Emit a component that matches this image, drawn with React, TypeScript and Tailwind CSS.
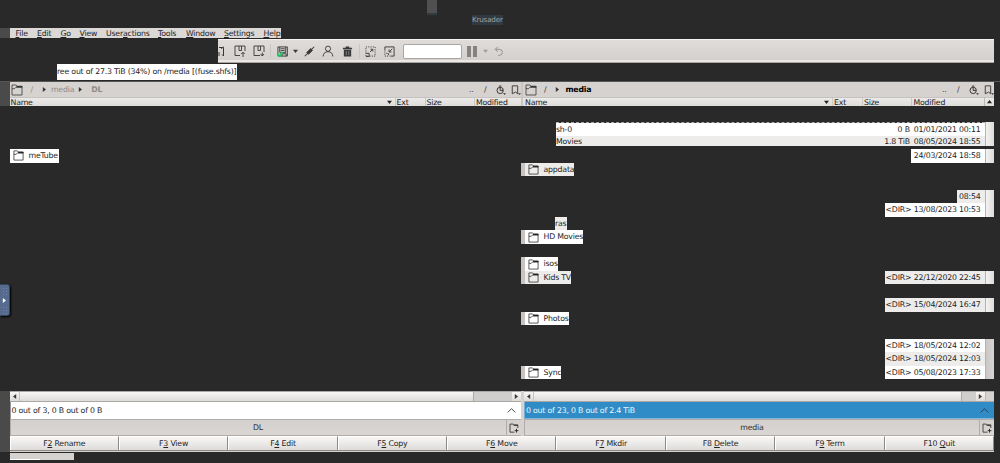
import type { ReactNode } from 'react'
import clsx from 'clsx'

type Entry = {
  left?: string
  name?: string
  nameWidth?: string
  detail?: [size: string, date: string]
  detailWidth?: string
  thumb?: boolean
}

const MENU: { label: string; key: number; gap: string }[] = [
  { label: 'File', key: 0, gap: 'w-[21.5px]' },
  { label: 'Edit', key: 0, gap: 'w-[23.5px]' },
  { label: 'Go', key: 0, gap: 'w-[19px]' },
  { label: 'View', key: 0, gap: 'w-[26.5px]' },
  { label: 'Useractions', key: 4, gap: 'w-[52px]' },
  { label: 'Tools', key: 0, gap: 'w-[28px]' },
  { label: 'Window', key: 0, gap: 'w-[38px]' },
  { label: 'Settings', key: 0, gap: 'w-[39.5px]' },
  { label: 'Help', key: 0, gap: 'w-[18px]' },
]

const ENTRIES: Entry[] = [
  { left: 'meTube', detail: ['', '24/03/2024 18:58'], detailWidth: 'w-[83px]' },
  { name: 'appdata', nameWidth: 'w-[53px]' },
  {},
  { detail: ['', '08:54'], detailWidth: 'w-[37px]' },
  { detail: ['<DIR>', '13/08/2023 10:53'], detailWidth: 'w-[109px]' },
  { name: 'ras' },
  { name: 'HD Movies', nameWidth: 'w-[62px]' },
  {},
  { name: 'isos', nameWidth: 'w-[37px]' },
  { name: 'Kids TV', nameWidth: 'w-[50px]', detail: ['<DIR>', '22/12/2020 22:45'], detailWidth: 'w-[109px]' },
  {},
  { detail: ['<DIR>', '15/04/2024 16:47'], detailWidth: 'w-[109px]' },
  { name: 'Photos', nameWidth: 'w-[48px]' },
  {},
  { detail: ['<DIR>', '18/05/2024 12:02'], detailWidth: 'w-[109px]', thumb: true },
  { detail: ['<DIR>', '18/05/2024 12:03'], detailWidth: 'w-[109px]', thumb: true },
  { name: 'Sync', nameWidth: 'w-[40px]', detail: ['<DIR>', '05/08/2023 17:33'], detailWidth: 'w-[109px]', thumb: true },
]

const KEYS: [string, string, string][] = [
  ['F', '2', ' Rename'],
  ['F', '3', ' View'],
  ['F', '4', ' Edit'],
  ['F', '5', ' Copy'],
  ['F', '6', ' Move'],
  ['F', '7', ' Mkdir'],
  ['F8 ', 'D', 'elete'],
  ['F', '9', ' Term'],
  ['F10 ', 'Q', 'uit'],
]

// ── Icons ───────────────────────────────────────────────────────────────

function Icon({ size = 12, className, children }: { size?: number; className?: string; children: ReactNode }) {
  return (
    <svg
      width={size}
      height={size}
      viewBox="0 0 12 12"
      fill="none"
      stroke="currentColor"
      className={clsx('shrink-0', className)}
    >
      {children}
    </svg>
  )
}

function FolderIcon({ className, size = 12 }: { className?: string; size?: number }) {
  return (
    <Icon size={size} className={className}>
      <path d="M1 11V1h4l1.2 1.2H11V11Z" strokeWidth=".8" />
      <path d="M1 4.7h2.6L5 3.2h6" strokeWidth=".8" />
      <path d="M5.5 2H11.4v1.5H5.5Z" fill="currentColor" stroke="none" />
    </Icon>
  )
}

function HistoryIcon() {
  return (
    <Icon size={10}>
      <circle cx="5" cy="6.5" r="3.8" strokeWidth="1.2" />
      <path d="M5 6.5V3M5 6.5h3.5M3.5 1.3h3" strokeWidth="1.2" />
      <path d="M8.5 10h3.5l-1.75 2Z" fill="currentColor" stroke="none" />
    </Icon>
  )
}

function BookmarkIcon() {
  return (
    <Icon size={10}>
      <path d="M1.5 1h6.5v9.5L5.5 8.5 1.5 10.5Z" strokeWidth="1.1" />
      <path d="M8.5 10h3.5l-1.75 2Z" fill="currentColor" stroke="none" />
    </Icon>
  )
}

function NewTabIcon() {
  return (
    <Icon size={10}>
      <path d="M6.5 11H1.2V1.3h4L6.4 2.5h4.2V6" strokeWidth="1" />
      <path d="M9 7v4.5M6.8 9.2h4.5" strokeWidth="1.2" />
      <path d="M5.5 2h5.4v1.3H5.5Z" fill="currentColor" stroke="none" />
    </Icon>
  )
}

function Triangle({ dir, className }: { dir: 'left' | 'right' | 'up' | 'down'; className?: string }) {
  const d = {
    left: 'M4.2 0v5L1 2.5Z',
    right: 'M.8 0v5L4 2.5Z',
    up: 'M0 4.2h5L2.5 1Z',
    down: 'M0 .8h5L2.5 4Z',
  }[dir]
  return (
    <svg width="5" height="5" viewBox="0 0 5 5" className={clsx('shrink-0', className)}>
      <path d={d} fill="currentColor" />
    </svg>
  )
}

// ── Toolbar ─────────────────────────────────────────────────────────────

function Toolbar() {
  return (
    <div className="ml-[218px] mr-[6px] flex h-[24px] shrink-0 items-center border-t border-b border-t-[#f5f3f2] border-b-[#a8a5a3] bg-linear-to-b from-[#e0dcda] to-[#d3cfcc] text-[#383838] shadow-[inset_0_-2px_0_#ebe8e6]">
      <Icon size={12} className="-ml-[5px] [clip-path:inset(0_0_0_5px)]">
        <path d="M6 2.5h4.5V11M8.2 3.8 10.5 1.8M9 9.5l1.5 1.5M6 11V7" strokeWidth="1" />
      </Icon>
      <Icon size={12} className="ml-[9px]">
        <path d="M6 10.5H1V1h10v5M5 1v4.5h2.5V1M9 12V7.5M7.2 9 9 7.2 10.8 9" strokeWidth=".9" />
      </Icon>
      <Icon size={12} className="ml-[7px]">
        <path d="M7 10.5H1V1h10v6M5 1v4.5h2.5V1M7.5 9 9.3 11 11 9M9.3 7.5V11" strokeWidth=".9" />
      </Icon>
      <span className="ml-[5px] h-[14px] w-px bg-[#c9c5c3]" />
      <Icon size={11} className="ml-[6px]">
        <path d="M1 1h10.3v10H1ZM3 1v6h6.5V1M4 3h4.5M4 5h4.5M5.5 11V8.5H10V11" strokeWidth="1" />
        <path d="m.5 8.8 2 2.2L6 6.7" stroke="#27c96b" strokeWidth="2.4" />
      </Icon>
      <Triangle dir="down" className="ml-[5px]" />
      <Icon size={11} className="ml-[6px]">
        <path d="M.8 11.2 4 8M8.5 3.5 11.2.8" strokeWidth="1.1" />
        <path d="M3 7.2 7.3 2.8 9.2 4.8 5 9Z" fill="currentColor" />
      </Icon>
      <Icon size={12} className="ml-[7px]">
        <circle cx="6" cy="3.7" r="2.6" strokeWidth=".9" />
        <path d="M1.2 11.5c0-3 1.8-4.8 4.8-4.8s4.8 1.8 4.8 4.8" strokeWidth=".9" />
      </Icon>
      <Icon size={11} className="ml-[8px]">
        <path d="M1 2h10v1.5H1ZM4 .5h4V2H4ZM2 4.2h8V11.5H2Z" fill="currentColor" stroke="none" />
        <path d="M4.6 5.5V10M7.4 5.5V10" stroke="#aaa6a4" strokeWidth=".7" />
      </Icon>
      <span className="ml-[6px] h-[14px] w-px bg-[#c9c5c3]" />
      <Icon size={11} className="ml-[5px]">
        <path d="M1 1h10v10H1Z" strokeWidth="1" strokeDasharray="1.2 1.3" />
        <path d="M1 8h3.5v3.5H1M5.5 6.5 8.2 3.8M6 3.5h2.5V6" strokeWidth="1" />
      </Icon>
      <Icon size={11} className="ml-[8px]">
        <path d="M1 5V1h10v10H7" strokeWidth="1" />
        <path d="M1 6v5h5" strokeWidth="1" strokeDasharray="1.2 1.2" />
        <path d="M9 3 6 6M5.5 3.8v2.7h2.7M2.5 8H4M5 8v2" strokeWidth="1" />
      </Icon>
      <span className="ml-[8px] h-[15px] w-[59px] rounded-[2px] border border-[#aaa6a3] bg-white" />
      <span className="ml-[5px] h-[11px] w-[4px] bg-[#858280]" />
      <span className="ml-[2px] h-[11px] w-[4px] bg-[#858280]" />
      <Triangle dir="down" className="ml-[6px] text-[#a09d9b]" />
      <Icon size={10} className="ml-[6px] text-[#94918f]">
        <path d="M4.5 1 1.5 4l3 3M1.5 4H6.5a3.6 3.6 0 0 1 0 7.2H5" strokeWidth="1.2" />
      </Icon>
    </div>
  )
}

// ── Panels ──────────────────────────────────────────────────────────────

function PathBar({ active, children }: { active?: boolean; children: ReactNode }) {
  return (
    <div className="flex h-[15px] items-center bg-[#d6d2cf] text-[#383838]">
      <FolderIcon className={active ? 'ml-[2px]' : 'ml-[1px]'} />
      {children}
      <div className="ml-auto flex items-center">
        <span className="w-[15px]">..</span>
        <span className="w-[12px]">/</span>
        <HistoryIcon />
        <span className="w-[5px]" />
        <BookmarkIcon />
      </div>
    </div>
  )
}

function Header({ right }: { right?: boolean }) {
  return (
    <div className="flex h-[9px] border-t border-[#c5c2bf] bg-linear-to-b from-[#eceae8] to-[#dfddda] leading-[9px] text-[#222]">
      <div className={clsx('flex items-start justify-between pr-[3px]', right ? 'w-[309px] pl-[2px]' : 'w-[385px] pl-[1px]')}>
        Name
        <Triangle dir="down" className="mt-[2px]" />
      </div>
      <div className="w-[30px] border-l border-[#cbc8c5] pl-px">Ext</div>
      <div className="w-[49px] border-l border-[#cbc8c5] pl-px">Size</div>
      <div className={clsx('border-l border-[#cbc8c5] pl-[1.5px]', right ? 'w-[73px]' : 'flex-1')}>Modified</div>
      {right && (
        <div className="flex flex-1 justify-center border-l border-[#b9b6b3]">
          <Triangle dir="up" className="mt-px" />
        </div>
      )}
    </div>
  )
}

function ScrollTrack({ thumb }: { thumb?: boolean }) {
  return (
    <div
      className={clsx(
        'w-[9px] shrink-0 self-stretch border-l border-[#b5b3b0]',
        thumb ? 'bg-linear-to-r from-[#c9c8c6] to-[#d5d4d2]' : 'bg-linear-to-r from-[#f4f3f2] to-[#dddbd8]',
      )}
    />
  )
}

function Details({ detail, width, thumb, alt }: { detail: [string, string]; width: string; thumb?: boolean; alt: boolean }) {
  return (
    <div className={clsx('ml-auto mr-[6px] flex', width)}>
      <div className={clsx('flex flex-1 justify-end pr-[4.5px]', alt ? 'bg-[#edecea]' : 'bg-white')}>
        {detail[0] && <span className="mr-auto pl-[.5px]">{detail[0]}</span>}
        <span>{detail[1]}</span>
      </div>
      <ScrollTrack thumb={thumb} />
    </div>
  )
}

function EntryRow({ entry, alt }: { entry: Entry; alt: boolean }) {
  return (
    <div className="flex h-[13.56px]">
      <div className="w-[521px] shrink-0">
        {entry.left && (
          <div className="ml-[9.5px] flex h-full w-[49.5px] items-center bg-white">
            <FolderIcon className="ml-[3px]" size={11} />
            <span className="ml-[5px]">{entry.left}</span>
          </div>
        )}
      </div>
      {entry.name && (
        <div className={clsx('flex items-center border-l-4 border-[#c8c4c2]', entry.nameWidth, alt ? 'bg-[#edecea]' : 'bg-white')}>
          <FolderIcon className="ml-[2.5px]" size={11} />
          <span className="ml-[5px]">{entry.name}</span>
        </div>
      )}
      {entry.detail && (
        <Details detail={entry.detail} width={entry.detailWidth ?? ''} thumb={entry.thumb} alt={alt} />
      )}
    </div>
  )
}

function FileList() {
  return (
    <div className="h-[285px] shrink-0 pt-[16px] leading-[13.5px] text-[#242424]">
      <div className="mr-[6px] ml-[556px] flex h-[24px]">
        <div className="flex flex-1 flex-col border-t border-dashed border-[#aaa]">
          <div className="flex h-[13px] shrink-0 justify-between bg-white pr-[4.5px] leading-[13px]">
            <span>sh-0</span>
            <span className="flex gap-[4px]"><span>0 B</span><span>01/01/2021 00:11</span></span>
          </div>
          <div className="flex h-[10px] shrink-0 justify-between bg-[#edecea] pr-[4.5px] leading-[12px]">
            <span>Movies</span>
            <span className="flex gap-[4px]"><span>1.8 TiB</span><span>08/05/2024 18:55</span></span>
          </div>
        </div>
        <ScrollTrack />
      </div>
      <div className="h-[3px]" />
      {ENTRIES.map((entry, i) =>
        entry.name === 'ras' ? (
          <div key={i} className="h-[13.56px]">
            <div className="ml-[554.5px] h-full w-[12.5px] bg-[#edecea] pl-[.5px]">{entry.name}</div>
          </div>
        ) : (
          <EntryRow key={i} entry={entry} alt={i % 2 === 1} />
        ),
      )}
    </div>
  )
}

function PanelFooter({ active, status, tab }: { active?: boolean; status: string; tab: string }) {
  return (
    <div className={active ? 'w-[470px]' : 'w-[511px]'}>
      <div className="flex h-[11px] items-center border-t border-b border-[#aaa7a4] bg-linear-to-b from-[#f7f6f5] to-[#dedcd9] text-[#383838]">
        <Triangle dir="left" className="mx-[2px]" />
        <span className="h-full w-px bg-[#c7c4c1]" />
        <span className="flex-1" />
        <span className={clsx('h-full border-l border-[#aaa] bg-[#cfcecc]', active ? 'w-[15px]' : 'w-[39px]')} />
        <Triangle dir="right" className="mx-[2px]" />
        {active && <span className="h-full w-[9px] border-l border-[#bbb] bg-[#d6d2cf]" />}
      </div>
      <div
        className={clsx(
          'flex h-[17px] items-center justify-between border-l pr-[5px] pl-px',
          active
            ? 'border-[#7ab0d8] bg-[#308cc6] text-[#f0f6fa] shadow-[inset_0_-1px_0_#84b6da]'
            : 'border-[#999] bg-white text-[#242424]',
        )}
      >
        {status}
        <Icon size={9} className="text-[#383838]">
          <path d="m1 8.5 5-5 5 5" strokeWidth="1.2" />
        </Icon>
      </div>
      <div className="flex h-[17px] border-t border-b border-l border-[#b0adab] bg-linear-to-b from-[#d4d0cd] to-[#dad6d3] leading-[16px] text-[#303030]">
        <span className="flex-1 border-r border-[#b0adab] text-center">{tab}</span>
        <span className="flex w-[14px] items-center justify-center">
          <NewTabIcon />
        </span>
      </div>
    </div>
  )
}

export default function App() {
  return (
    <div className="relative flex h-[463px] w-[1000px] flex-col overflow-hidden bg-[#292929] font-['DejaVu_Sans',sans-serif] text-[7.8px] tracking-[-0.2px] whitespace-pre">
      <div className="flex h-[28px] shrink-0">
        <div className="ml-[427px] h-[15px] w-[10px] border-b-2 border-[#303b42] bg-[#505050]" />
        <div className="mt-[15px] ml-[35px] h-[10px] w-[31px] bg-[#303a40] text-[7.2px] leading-[10px] text-[#a0a2a3]">
          Krusader
        </div>
      </div>

      <div className="flex h-[10px] shrink-0">
        <div className="w-[9.5px] bg-[#4a4a4a]" />
        <div className="flex w-[271.5px] bg-[#dcd8d6] pl-[6px] leading-[11px] text-[#222]">
          {MENU.map(({ label, key, gap }) => (
            <span key={label} className={clsx('shrink-0', gap)}>
              {label.slice(0, key)}
              <span className="underline underline-offset-1">{label[key]}</span>
              {label.slice(key + 1)}
            </span>
          ))}
        </div>
      </div>

      <div className="h-[1px] shrink-0" />
      <Toolbar />
      <div className="mt-[1px] ml-[57px] h-[16px] w-[180px] shrink-0 bg-white leading-[16px] text-[#242424]">
        ree out of 27.3 TiB (34%) on /media [(fuse.shfs)]
      </div>

      <div className="mt-[1px] flex h-[25px] shrink-0 border-t border-[#555]">
        <div className="w-[9.5px] bg-[#4a4a4a]" />
        <div className="w-[511.5px]">
          <PathBar>
            <span className="ml-[8px] text-[#8f8c8a]">/</span>
            <Triangle dir="right" className="ml-[9px]" />
            <span className="ml-[4px] text-[#8f8c8a]">media</span>
            <Triangle dir="right" className="ml-[4px]" />
            <span className="ml-[8px] font-bold text-[#8f8c8a]">DL</span>
          </PathBar>
          <Header />
        </div>
        <div className="w-[2px] bg-[#c9c5c2]" />
        <div className="w-[471px]">
          <PathBar active>
            <span className="ml-[7px]">/</span>
            <Triangle dir="right" className="ml-[9px]" />
            <span className="ml-[5px] font-bold text-black">media</span>
          </PathBar>
          <Header right />
        </div>
      </div>

      <FileList />

      <div className="flex h-[61px] shrink-0">
        <div className="w-[9.5px] bg-[#4a4a4a]" />
        <div className="w-[984.5px] bg-[#d6d2cf]">
          <div className="flex justify-between">
            <PanelFooter status="0 out of 3, 0 B out of 0 B" tab="DL" />
            <PanelFooter active status="0 out of 23, 0 B out of 2.4 TiB" tab="media" />
          </div>
          <div className="flex h-[15px] border-b border-[#8c8987] text-[#242424]">
            {KEYS.map(([pre, key, post]) => (
              <div
                key={key}
                className="flex-1 border-t border-r border-l border-t-[#fff] border-r-[#8c8987] border-l-[#fff] bg-linear-to-b from-[#f8f7f6] to-[#dedcda] text-center leading-[13px]"
              >
                {pre}
                <span className="underline underline-offset-1">{key}</span>
                {post}
              </div>
            ))}
          </div>
        </div>
      </div>
      <div className="mt-[1px] ml-[9.5px] h-[7px] w-[64.5px] shrink-0 bg-[#d6d2cf]">
        <div className="h-full w-[30px] border-b border-white" />
      </div>

      {/* remote session drawer handle, floats over the window edge */}
      <div className="absolute top-[284px] left-0 flex h-[32px] w-[10px] flex-col items-center justify-center gap-[3px] rounded-r-[3px] border border-l-0 border-[#37465c] bg-[#566b8d] shadow-[1px_1px_2px_#000]">
        <span className="h-[8px] w-[5px] bg-[radial-gradient(#7084a5_35%,transparent_40%)] bg-[length:3px_3px]" />
        <Triangle dir="right" className="text-white" />
        <span className="h-[8px] w-[5px] bg-[radial-gradient(#7084a5_35%,transparent_40%)] bg-[length:3px_3px]" />
      </div>
    </div>
  )
}
